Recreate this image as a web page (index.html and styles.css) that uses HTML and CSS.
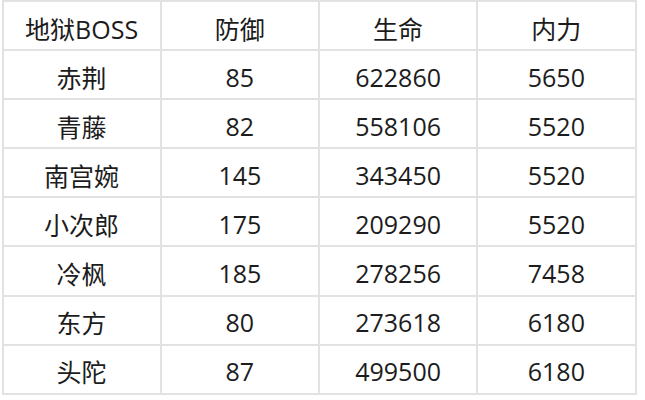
FILE: index.html
```html
<!DOCTYPE html>
<html lang="zh">
<head>
<meta charset="utf-8">
<link rel="stylesheet" href="styles.css">
</head>
<body>
<div class="table">
  <div class="cell">地狱BOSS</div><div class="cell">防御</div><div class="cell">生命</div><div class="cell">内力</div>
  <div class="cell">赤荆</div><div class="cell">85</div><div class="cell">622860</div><div class="cell">5650</div>
  <div class="cell">青藤</div><div class="cell">82</div><div class="cell">558106</div><div class="cell">5520</div>
  <div class="cell">南宫婉</div><div class="cell">145</div><div class="cell">343450</div><div class="cell">5520</div>
  <div class="cell">小次郎</div><div class="cell">175</div><div class="cell">209290</div><div class="cell">5520</div>
  <div class="cell">冷枫</div><div class="cell">185</div><div class="cell">278256</div><div class="cell">7458</div>
  <div class="cell">东方</div><div class="cell">80</div><div class="cell">273618</div><div class="cell">6180</div>
  <div class="cell">头陀</div><div class="cell">87</div><div class="cell">499500</div><div class="cell">6180</div>
</div>
</body>
</html>
```

FILE: styles.css
```css
html, body {
  margin: 0;
  padding: 0;
  background: #ffffff;
}

.table {
  margin-left: 1.5px;
  width: 635px;
  box-sizing: border-box;
  display: grid;
  grid-template-columns: repeat(4, 1fr);
  grid-auto-rows: 47.1px;
  gap: 2px;
  padding: 2px;
  background: #e2e2e2;
}

.cell {
  background: #ffffff;
  display: flex;
  align-items: center;
  justify-content: center;
  padding-top: 4px;
  box-sizing: border-box;
  font-family: "Open Sans", "Noto Sans CJK SC", sans-serif;
  font-size: 25px;
  color: #1c1c1c;
}
```
